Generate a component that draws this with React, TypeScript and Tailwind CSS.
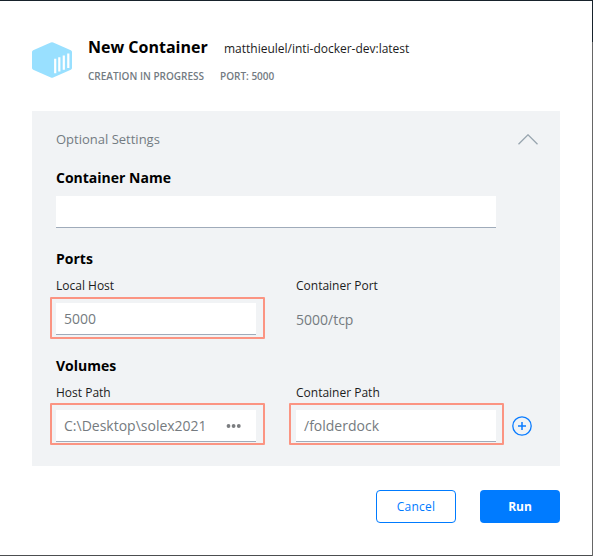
import React from "react";

function Highlight({ inset }: { inset: string }) {
  return (
    <span className={`pointer-events-none absolute rounded-[1px] border-2 border-[#fb9482] ${inset}`} />
  );
}

function Heading({ children }: { children: React.ReactNode }) {
  return (
    <h2 className="h-5 text-[14px] leading-5 font-bold whitespace-nowrap text-black">
      {children}
    </h2>
  );
}

function Label({ children }: { children: React.ReactNode }) {
  return (
    <span className="block h-4 text-[12px] leading-4 font-normal whitespace-nowrap text-[#1c1c1c]">
      {children}
    </span>
  );
}

function ContainerLogo() {
  return (
    <svg width="40" height="36" viewBox="0 0 40 36" className="mt-[42px] shrink-0">
      <path
        d="M18.8.4Q20 0 21.2.4L38.8 8.2Q40 8.8 40 10V26Q40 27.2 38.8 27.8L21.2 35.5Q20 36 18.8 35.5L1.2 27.8Q0 27.2 0 26V10Q0 8.8 1.2 8.2Z"
        fill="#99e0ff"
      />
      <path d="M23.2 16.8V31.2M27.3 15.2V29.5M31.8 13.4V27.7M36.3 11.6V26" stroke="white" strokeWidth="2.2" />
    </svg>
  );
}

export default function App() {
  return (
    <div className="flex h-[556px] w-[593px] bg-white font-['Open_Sans',sans-serif]">
      <main className="flex w-[592px] flex-col border-t border-b border-t-[#17222b] border-b-[#4c4e50] pr-8 pl-8">
        <header className="-mt-px flex h-[111px] gap-4">
          <ContainerLogo />
          <div className="pt-[35px]">
            <div className="flex h-6 items-baseline">
              <h1 className="w-[136px] text-[16px] leading-6 font-bold whitespace-nowrap text-black">
                New Container
              </h1>
              <span className="text-[12px] leading-6 tracking-[-0.01px] whitespace-nowrap text-[#1c1c1c]">
                matthieulel/inti-docker-dev:latest
              </span>
            </div>
            <div className="mt-[9px] flex gap-4 text-[10px] leading-4 font-semibold whitespace-nowrap text-[#737b82]">
              <span className="w-[116px]">CREATION IN PROGRESS</span>
              <span>PORT: 5000</span>
            </div>
          </div>
        </header>

        <section className="h-[355px] shrink-0 bg-[#f1f3f5] pt-[18px] pl-6">
          <div className="flex h-5 w-[482px] items-center justify-between">
            <span className="text-[13px] leading-5 text-[#737b82]">Optional Settings</span>
            <svg width="20" height="11" viewBox="0 0 20 11" fill="none" stroke="#98a5af" strokeWidth="1.3">
              <path d="M.5 10.3L10 .8L19.5 10.3" />
            </svg>
          </div>

          <div className="mt-[19px]">
            <Heading>Container Name</Heading>
            <div className="mt-2 h-8 w-[440px] border-b border-[#9fabba] bg-white" />
          </div>

          <div className="mt-[21px]">
            <Heading>Ports</Heading>
            <div className="mt-[9px] flex gap-10">
              <div className="w-[200px]">
                <Label>Local Host</Label>
                <div className="relative mt-[9px] h-8 border-b border-[#9fabba] bg-white pl-2 text-[14px] leading-8 text-[#757b80]">
                  5000
                  <Highlight inset="-top-[6px] -right-[9px] -bottom-[5px] -left-[6px]" />
                </div>
              </div>
              <div className="w-[200px]">
                <Label>Container Port</Label>
                <div className="mt-[10px] text-[14px] leading-8 text-[#757b80]">5000/tcp</div>
              </div>
            </div>
          </div>

          <div className="mt-[20px]">
            <Heading>Volumes</Heading>
            <div className="mt-[9px] flex gap-10">
              <div className="w-[200px]">
                <Label>Host Path</Label>
                <div className="relative mt-[9px] flex h-8 border-b border-[#9fabba] bg-white pl-2 text-[14px] leading-8 text-[#757b80]">
                  <span className="w-[140px] overflow-hidden whitespace-nowrap">C:\Desktop\solex2021</span>
                  <svg width="16" height="4" viewBox="0 0 16 4" className="mt-[14px] ml-[22px]" fill="#7b7d80">
                    <circle cx="2.5" cy="2" r="1.9" />
                    <circle cx="7.6" cy="2" r="1.9" />
                    <circle cx="12.8" cy="2" r="1.9" />
                  </svg>
                  <Highlight inset="-top-[7px] -right-[9px] -bottom-[4px] -left-[6px]" />
                </div>
              </div>
              <div className="flex gap-4">
                <div className="w-[200px]">
                  <Label>Container Path</Label>
                  <div className="relative mt-[9px] h-8 border-b border-[#9fabba] bg-white pl-2 text-[14px] leading-8 text-[#757b80]">
                    /folderdock
                    <Highlight inset="-top-[7px] -right-[8px] -bottom-[4px] -left-[7px]" />
                  </div>
                </div>
                <svg
                  width="20"
                  height="20"
                  viewBox="0 0 20 20"
                  className="mt-[31px]"
                  fill="none"
                  stroke="#0a7cff"
                  strokeWidth="1.3"
                >
                  <circle cx="10" cy="10" r="9.2" />
                  <path d="M10 6V14M6 10H14" strokeWidth="1.5" />
                </svg>
              </div>
            </div>
          </div>
        </section>

        <footer className="mt-6 flex justify-end gap-6 text-[12px]">
          <button className="h-[33px] w-20 rounded border border-[#007bff] leading-[31px] font-normal tracking-[0.2px] text-[#007bff]">
            Cancel
          </button>
          <button className="h-[33px] w-20 rounded bg-[#007bff] leading-[33px] font-bold text-white">Run</button>
        </footer>
      </main>
      <aside className="w-px bg-[#666]">
        <div className="h-[42px] bg-[#17222b]" />
      </aside>
    </div>
  );
}
